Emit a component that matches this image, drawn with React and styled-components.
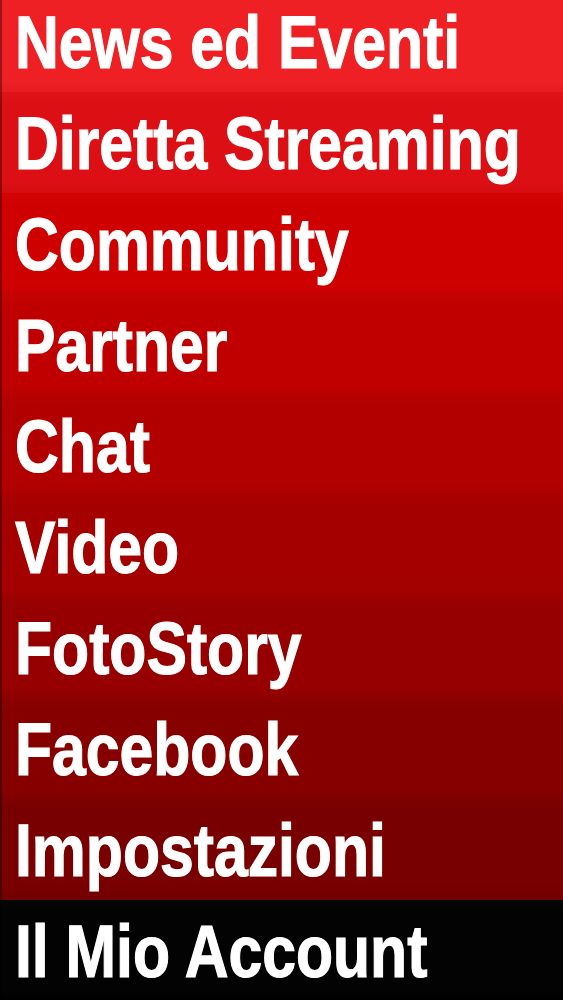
import React from 'react';
import styled, { createGlobalStyle } from 'styled-components';

const GlobalStyle = createGlobalStyle`
  html, body {
    margin: 0;
    padding: 0;
    background: #000;
    overflow: hidden;
  }
`;

const Viewport = styled.div`
  width: 563px;
  height: 1000px;
  overflow: hidden;
`;

const Menu = styled.nav`
  display: flex;
  flex-direction: column;
  margin-top: -9px;
`;

const MenuItem = styled.div`
  height: 101px;
  flex-shrink: 0;
  display: flex;
  align-items: center;
  padding-left: 13px;
  box-sizing: border-box;
  background: linear-gradient(to bottom, ${props => props.top} 0%, ${props => props.color} 12%, ${props => props.color} 90%, ${props => props.bottom} 100%);
  border-left: 2px solid rgba(0, 0, 0, 0.35);
`;

const Label = styled.span`
  font-family: "Liberation Sans", Arial, sans-serif;
  font-weight: bold;
  font-size: 74px;
  line-height: 1;
  color: #fff;
  -webkit-text-stroke: 1.2px #fff;
  white-space: nowrap;
  display: inline-block;
  transform: scaleX(0.82);
  transform-origin: left center;
  margin-top: 2px;
`;

const items = [
  { label: 'News ed Eventi', top: '#ef2226', color: '#ee2024', bottom: '#e51c20' },
  { label: 'Diretta Streaming', top: '#e01418', color: '#dc1014', bottom: '#d50c10' },
  { label: 'Community', top: '#d40404', color: '#cf0000', bottom: '#c80000' },
  { label: 'Partner', top: '#c40202', color: '#c00000', bottom: '#b80000' },
  { label: 'Chat', top: '#b60000', color: '#b20000', bottom: '#aa0000' },
  { label: 'Video', top: '#a80000', color: '#a50000', bottom: '#9d0000' },
  { label: 'FotoStory', top: '#9a0000', color: '#960000', bottom: '#8e0000' },
  { label: 'Facebook', top: '#8b0000', color: '#870000', bottom: '#800000' },
  { label: 'Impostazioni', top: '#7c0000', color: '#780000', bottom: '#700000' },
  { label: 'Il Mio Account', top: '#050505', color: '#030303', bottom: '#000000' },
];

export default function App() {
  return (
    <>
      <GlobalStyle />
      <Viewport>
        <Menu>
          {items.map(item => (
            <MenuItem key={item.label} top={item.top} color={item.color} bottom={item.bottom}>
              <Label>{item.label}</Label>
            </MenuItem>
          ))}
        </Menu>
      </Viewport>
    </>
  );
}
